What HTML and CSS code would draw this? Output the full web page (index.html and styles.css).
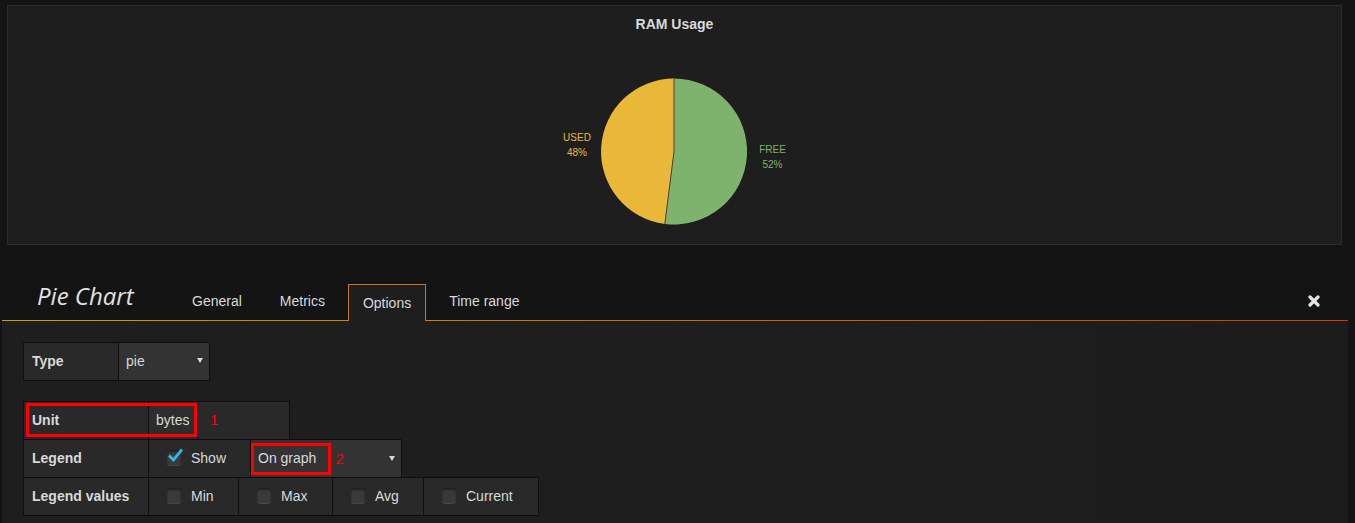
FILE: index.html
```html
<!DOCTYPE html>
<html>
<head>
<meta charset="utf-8">
<title>Pie Chart</title>
<link rel="stylesheet" href="styles.css">
</head>
<body>
<div class="panel">
  <div class="panel-title">RAM Usage</div>
  <svg class="pie" width="259" height="170" viewBox="0 0 259 170">
    <path class="slice-free" d="M129,85.5 L129,12.5 A73,73 0 1,1 119.85,157.92 Z"/>
    <path class="slice-used" d="M129,85.5 L119.85,157.92 A73,73 0 0,1 129,12.5 Z"/>
    <path class="slice-sep" d="M129,12.5 L129,85.5 L119.85,157.92"/>
    <text class="lbl-used" x="32" y="74.6">USED</text>
    <text class="lbl-used" x="32" y="89.6">48%</text>
    <text class="lbl-free" x="227.5" y="86.6">FREE</text>
    <text class="lbl-free" x="227.5" y="101.6">52%</text>
  </svg>
</div>

<div class="editor">
  <div class="editor-header">
    <div class="editor-title">Pie Chart</div>
    <ul class="tabs">
      <li class="tab">General</li>
      <li class="tab">Metrics</li>
      <li class="tab active">Options</li>
      <li class="tab">Time range</li>
    </ul>
    <svg class="close" viewBox="0 0 12 12" width="12" height="12">
      <path d="M2,2 L10,10 M10,2 L2,10"/>
    </svg>
  </div>

  <div class="editor-body">
    <div class="form-row">
      <div class="cell label w-type">Type</div>
      <div class="cell select w-pie">pie<span class="caret"></span></div>
    </div>

    <div class="form-group">
      <div class="form-row">
        <div class="cell label w-label">Unit</div>
        <div class="cell value w-bytes">bytes</div>
        <div class="cell value w-empty"><span class="mark mark-1">1</span></div>
        <div class="annot annot-unit"></div>
      </div>
      <div class="form-row">
        <div class="cell label w-label">Legend</div>
        <div class="cell check w-show">
          <span class="box">
            <svg class="tick" width="16" height="14" viewBox="0 0 16 14"><polyline points="2,6.5 6.5,11 15,0.5"/></svg>
          </span>
          <span>Show</span>
        </div>
        <div class="cell select w-legend-sel">
          <span class="annot-inline">On graph</span>
          <span class="mark mark-2">2</span>
          <span class="caret"></span>
        </div>
      </div>
      <div class="form-row">
        <div class="cell label w-label">Legend values</div>
        <div class="cell check w-min"><span class="box"></span><span>Min</span></div>
        <div class="cell check w-max"><span class="box"></span><span>Max</span></div>
        <div class="cell check w-avg"><span class="box"></span><span>Avg</span></div>
        <div class="cell check w-current"><span class="box"></span><span>Current</span></div>
      </div>
    </div>
  </div>
</div>
</body>
</html>
```

FILE: styles.css
```css
html, body {
  margin: 0;
  padding: 0;
}
body {
  background: #141414;
  font-family: "Liberation Sans", Arial, sans-serif;
  color: #d8d9da;
  height: 523px;
  overflow: hidden;
}

/* ---------- dashboard panel ---------- */
.panel {
  margin: 5px 13px 0 7px;
  height: 240px;
  box-sizing: border-box;
  border: 1px solid #2c2c2c;
  background: #1f1e1f;
}
.panel-title {
  text-align: center;
  font-weight: bold;
  font-size: 14px;
  line-height: 18px;
  padding-top: 9px;
  color: #d8d9da;
}
.pie {
  display: block;
  margin: 33px auto 0;
  overflow: visible;
}
.slice-free { fill: #7eb26d; }
.slice-used { fill: #eab839; }
.slice-sep { fill: none; stroke: #4a4430; stroke-width: 1; }
.lbl-used, .lbl-free {
  font-family: "Liberation Sans", Arial, sans-serif;
  font-size: 10px;
  text-anchor: middle;
}
.lbl-used { fill: #eab839; }
.lbl-free { fill: #7eb26d; }

/* ---------- editor ---------- */
.editor {
  margin: 0 7px 0 2px;
}
.editor-header {
  display: flex;
  align-items: flex-end;
  height: 76px;
  box-sizing: border-box;
  padding-left: 35px;
  border-bottom: 1px solid transparent;
  border-image: linear-gradient(to right, #c9a000, #d23c00) 1;
}
.editor-title {
  width: 140px;
  font-family: "Open Sans", sans-serif;
  font-style: italic;
  font-size: 24px;
  line-height: 32px;
  margin-bottom: 8px;
  color: #e2e2e2;
}
.tabs {
  display: flex;
  align-items: flex-start;
  gap: 8px;
  list-style: none;
  margin: 0;
  padding: 0;
}
.tab {
  height: 36px;
  box-sizing: border-box;
  padding: 0 14px;
  border: 1px solid transparent;
  border-bottom: 0;
  font-size: 14px;
  line-height: 33px;
  color: #d8d9da;
}
.tab.active {
  height: 37px;
  margin-bottom: -1px;
  line-height: 36px;
  background: #1f1e1f;
  border-color: #c47a10;
}
.close {
  display: block;
  margin-left: auto;
  margin-right: 28px;
  margin-bottom: 13px;
}
.close path {
  stroke: #e4e4e4;
  stroke-width: 3.2;
  stroke-linecap: round;
}

.editor-body {
  background: linear-gradient(to right, #1f1e1f 0%, #1f1e1f 70%, #1c1c1c 100%);
  height: 202px;
  box-sizing: border-box;
  padding: 21px 0 0 21px;
}

/* ---------- tight form ---------- */
.form-row {
  display: flex;
  width: max-content;
  position: relative;
}
.form-group {
  margin-top: 20px;
}
.form-group .form-row + .form-row {
  margin-top: -1px;
}
.cell {
  box-sizing: border-box;
  height: 39px;
  border: 1px solid #0f0f0f;
  margin-right: -1px;
  display: flex;
  align-items: center;
  padding: 0 8px 2px;
  background: #292929;
  font-size: 14px;
  white-space: nowrap;
}
.label { font-weight: bold; }
.select { background: #333333; }

.w-type { width: 96px; }
.w-pie { width: 92px; padding: 0 6px 2px 7px; }
.w-label { width: 126px; }
.w-bytes { width: 50px; padding-left: 7px; background: #2d2d2d; }
.w-empty { width: 93px; padding-left: 12px; }
.w-show { width: 103px; }
.w-legend-sel { width: 152px; padding: 0 6px 0 0; }
.w-min { width: 91px; }
.w-max { width: 95px; }
.w-avg { width: 92px; }
.w-current { width: 116px; }

.caret {
  width: 0;
  height: 0;
  border-left: 3px solid transparent;
  border-right: 3px solid transparent;
  border-top: 5px solid #d8d9da;
  margin-left: auto;
}

.check {
  gap: 10px;
  padding-left: 18px;
}
.box {
  position: relative;
  width: 14px;
  height: 15px;
  border-radius: 3px;
  background: #3a3a3a;
  box-shadow: inset 0 2px 2px rgba(0, 0, 0, 0.45), 0 1px 0 #474747;
}
.tick {
  position: absolute;
  left: 0;
  top: -1px;
  overflow: visible;
}
.tick polyline {
  fill: none;
  stroke: #33b5e5;
  stroke-width: 2.8;
  stroke-linejoin: miter;
}

/* ---------- red annotations ---------- */
.mark {
  color: #ff0000;
  font-size: 15px;
}
.mark-2 { margin-left: 4px; }
.annot {
  position: absolute;
  left: 3px;
  top: 2px;
  width: 171px;
  height: 34px;
  box-sizing: border-box;
  border: 3px solid #ff0000;
}
.annot-inline {
  display: inline-flex;
  align-items: center;
  height: 32px;
  box-sizing: border-box;
  border: 3px solid #ff0000;
  padding: 0 12px 2px 4px;
  margin-top: 1px;
}
```
